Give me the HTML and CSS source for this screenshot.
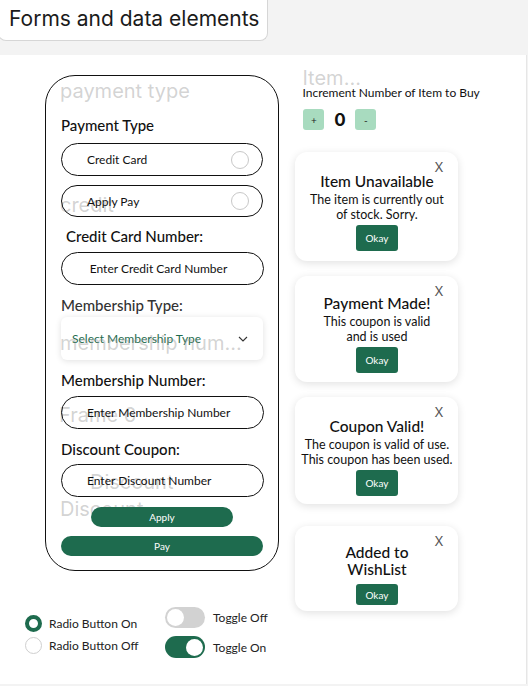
FILE: index.html
```html
<!DOCTYPE html>
<html>
<head>
<meta charset="utf-8">
<link rel="stylesheet" href="styles.css">
</head>
<body>
<header class="top">
  <div class="title">Forms and data elements</div>
</header>
<main class="panel">
  <section class="left">
    <div class="form-card">
      <span class="ghost g-payment">payment type</span>
      <span class="ghost g-credit">credit</span>
      <span class="ghost g-member">membership num...</span>
      <span class="ghost g-frame">Frame 6</span>
      <span class="ghost g-disc1">Discount</span>
      <span class="ghost g-disc2">Discount</span>

      <div class="label l-pay">Payment Type</div>
      <div class="pill option o1"><span>Credit Card</span><i class="radio-empty"></i></div>
      <div class="pill option o2"><span>Apply Pay</span><i class="radio-empty"></i></div>
      <div class="label l-ccn">Credit Card Number:</div>
      <div class="pill input i1">Enter Credit Card Number</div>
      <div class="label l-mt">Membership Type:</div>
      <div class="select">
        <span>Select Membership Type</span>
        <svg class="chev" width="10" height="6" viewBox="0 0 10 6"><path d="M1 1l4 4 4-4" fill="none" stroke="#333" stroke-width="1.1"/></svg>
      </div>
      <div class="label l-mn">Membership Number:</div>
      <div class="pill input i2 left-text">Enter Membership Number</div>
      <div class="label l-dc">Discount Coupon:</div>
      <div class="pill input i3 left-text">Enter Discount Number</div>
      <button class="btn-apply">Apply</button>
      <button class="btn-pay">Pay</button>
    </div>
    <div class="controls">
      <div class="radios">
        <div class="radio-row"><i class="radio-on"></i><span>Radio Button On</span></div>
        <div class="radio-row"><i class="radio-off"></i><span>Radio Button Off</span></div>
      </div>
      <div class="toggles">
        <div class="toggle-row"><i class="toggle off"><b></b></i><span>Toggle Off</span></div>
        <div class="toggle-row"><i class="toggle on"><b></b></i><span>Toggle On</span></div>
      </div>
    </div>
  </section>
  <section class="right">
    <span class="ghost g-item">Item...</span>
    <div class="inc-label">Increment Number of Item to Buy</div>
    <div class="counter">
      <button class="step">+</button>
      <span class="count">0</span>
      <button class="step">-</button>
    </div>
    <div class="modal m1">
      <span class="close">X</span>
      <div class="m-title">Item Unavailable</div>
      <div class="m-body">The item is currently out<br>of stock. Sorry.</div>
      <button class="okay">Okay</button>
    </div>
    <div class="modal m2">
      <span class="close">X</span>
      <div class="m-title">Payment Made!</div>
      <div class="m-body">This coupon is valid<br>and is used</div>
      <button class="okay">Okay</button>
    </div>
    <div class="modal m3">
      <span class="close">X</span>
      <div class="m-title">Coupon Valid!</div>
      <div class="m-body">The coupon is valid of use.<br>This coupon has been used.</div>
      <button class="okay">Okay</button>
    </div>
    <div class="modal m4">
      <span class="close">X</span>
      <div class="m-title">Added to<br>WishList</div>
      <button class="okay short">Okay</button>
    </div>
  </section>
</main>
</body>
</html>
```

FILE: styles.css
```css
* { box-sizing: border-box; }
html, body { margin: 0; padding: 0; }
body {
  width: 528px;
  height: 686px;
  background: #f3f3f3;
  font-family: "Lato", "Noto Sans", sans-serif;
  color: #111;
  overflow: hidden;
}
button { font-family: inherit; border: none; cursor: pointer; padding: 0; }

.top { height: 55px; }
.title {
  width: 270px;
  height: 42px;
  margin-left: -2px;
  background: #fff;
  border: 1px solid #d6d6d6;
  border-top: none;
  border-radius: 0 0 8px 8px;
  font-family: "Inter", sans-serif;
  font-size: 21px;
  line-height: 40px;
  padding-left: 10px;
  color: #1b1b1b;
  position: relative;
  top: -1px;
}

.panel {
  height: 629px;
  width: 527px;
  background: #fff;
  border-right: 1px solid #e6e6e6;
  display: flex;
}

.left { width: 290px; padding-top: 20px; }
.ghost {
  position: absolute;
  color: rgba(150,150,150,0.42);
  font-family: "Inter", sans-serif;
  font-size: 20px;
  white-space: nowrap;
  pointer-events: none;
}

.form-card {
  position: relative;
  margin-left: 45px;
  width: 234px;
  height: 496px;
  border: 1.5px solid #111;
  border-radius: 30px;
  padding: 0 0 0 15px;
  display: flex;
  flex-direction: column;
}
.g-payment { left: 14px; top: 3px; }
.g-credit { left: 14px; top: 117px; }
.g-member { left: 14px; top: 255px; }
.g-frame { left: 13px; top: 327px; }
.g-disc1 { left: 44px; top: 394px; }
.g-disc2 { left: 14px; top: 421px; }

.label { font-size: 15px; line-height: 17px; font-weight: 500; color: #111; }
.l-pay { margin-top: 41px; }
.l-ccn { margin-top: 11px; margin-left: 5px; }
.l-mt { margin-top: 12px; color: #333; }
.l-mn { margin-top: 12px; }
.l-dc { margin-top: 12px; }

.pill {
  width: 202px;
  height: 33px;
  border: 1.5px solid #111;
  border-radius: 17px;
  font-size: 12px;
  display: flex;
  align-items: center;
  color: #111;
  position: relative;
  z-index: 1;
}
.option { justify-content: space-between; padding: 0 13px 0 25px; }
.o1 { margin-top: 9px; }
.o2 { margin-top: 9px; height: 32px; }
.radio-empty {
  width: 18px; height: 18px; border-radius: 50%;
  border: 1px solid #c8c8c8; display: block;
}
.input { justify-content: center; margin-top: 7px; width: 203px; height: 33px; padding-right: 8px; }
.i3 { margin-top: 6px; }
.left-text { justify-content: flex-start; padding-left: 25px; }

.select {
  margin-top: 3px;
  width: 202px;
  height: 43px;
  border-radius: 6px;
  background: #fff;
  box-shadow: 0 1px 6px rgba(0,0,0,0.12);
  display: flex;
  align-items: center;
  justify-content: space-between;
  padding: 0 15px 0 11px;
  font-size: 12px;
  color: #1e6b4e;
}

.btn-apply, .btn-pay {
  background: #1e6b4e;
  color: #fff;
  font-size: 10px;
  border-radius: 10px;
  height: 20px;
  position: relative;
  z-index: 1;
}
.btn-apply { margin-top: 10px; margin-left: 30px; width: 142px; }
.btn-pay { margin-top: 9px; width: 202px; }

.controls { display: flex; margin-top: 37px; padding-left: 25px; }
.radios { width: 140px; padding-top: 4px; }
.radio-row { display: flex; align-items: center; height: 22px; font-size: 12px; color: #222; }
.radio-row span { margin-left: 7px; }
.radio-on, .radio-off {
  width: 17px; height: 17px; border-radius: 50%; display: block;
}
.radio-on { background: #fff; border: 4.5px solid #1e6b4e; }
.radio-off { border: 1px solid #cfcfcf; }
.toggles { display: flex; flex-direction: column; gap: 8px; margin-top: -1px; }
.toggle-row { display: flex; align-items: center; font-size: 12px; color: #222; }
.toggle-row span { margin-left: 8px; }
.toggle {
  width: 40px; height: 21px; border-radius: 11px; display: flex; align-items: center; padding: 0 2px;
}
.toggle b { width: 17px; height: 17px; border-radius: 50%; background: #fff; display: block; }
.toggle.off { background: #d2d2d2; }
.toggle.on { background: #1e6b4e; justify-content: flex-end; height: 22px; }

.right { position: relative; padding-top: 31px; width: 237px; padding-left: 6px; }
.g-item { left: 13px; top: 11px; }
.inc-label { font-size: 12px; line-height: 14px; margin-left: 7px; color: #111; }
.counter { display: flex; align-items: center; margin-top: 9px; margin-left: 8px; height: 21px; }
.step {
  width: 21px; height: 21px; background: #a8dbbf; border-radius: 3px;
  font-size: 10px; color: #222;
}
.count { font-weight: 700; font-size: 17px; width: 31px; text-align: center; font-family: "Inter", sans-serif; }

.modal {
  position: relative;
  width: 163px;
  background: #fff;
  border-radius: 12px;
  box-shadow: 0 2px 9px rgba(0,0,0,0.12);
  display: flex;
  flex-direction: column;
  align-items: center;
  text-align: center;
  color: #111;
}
.close {
  position: absolute; right: 15px; top: 7px;
  font-size: 13px; color: #555; font-family: "Inter", sans-serif;
}
.m1 { margin-top: 22px; height: 109px; padding-top: 21px; }
.m2 { margin-top: 15px; height: 106px; padding-top: 19px; }
.m3 { margin-top: 15px; height: 107px; padding-top: 21px; }
.m4 { margin-top: 22px; height: 85px; padding-top: 18px; }
.m-title { font-size: 15.5px; line-height: 17px; font-weight: 500; }
.m-body { font-size: 12.5px; line-height: 14.5px; margin-top: 3px; }
.okay {
  background: #1e6b4e; color: #fff; font-size: 10px;
  width: 42px; height: 26px; border-radius: 3px; margin-top: 3px;
}
.okay.short { height: 21px; margin-top: 6px; }
```
